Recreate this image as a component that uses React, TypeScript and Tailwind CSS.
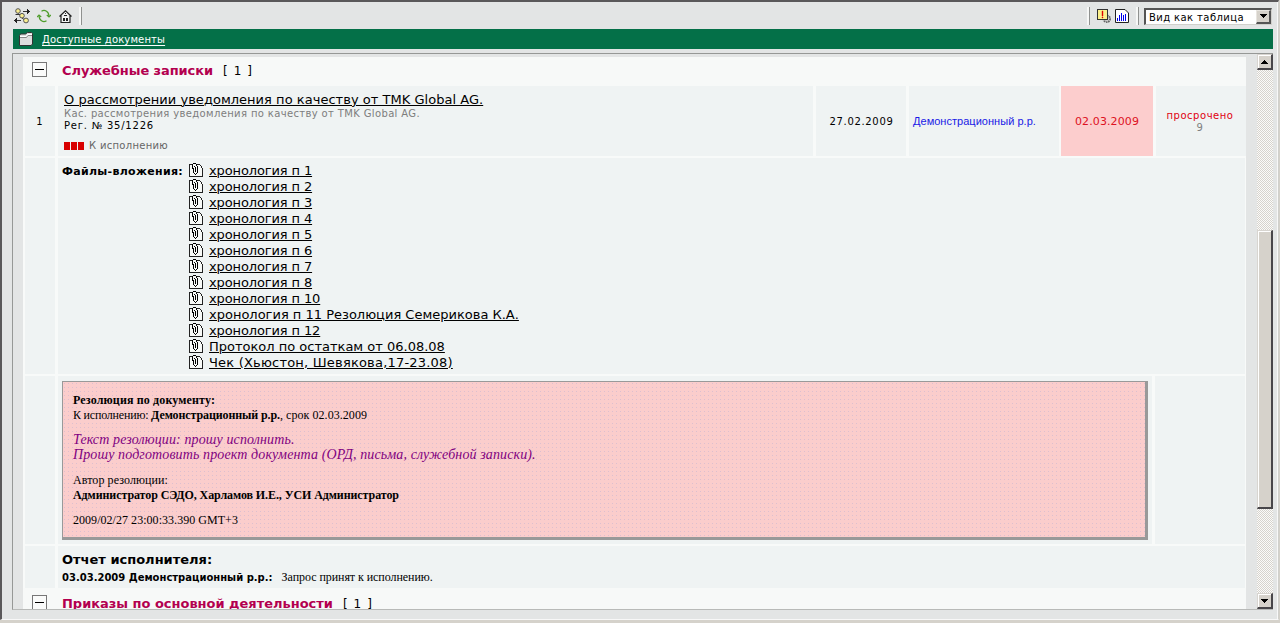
import type { ReactNode } from "react";

const cell = "bg-[#eff3f3]";

function Separator() {
  return <div className="h-[18px] w-[3px] border-l-2 border-r border-l-[#f6f7f6] border-r-[#8f918f]" />;
}

function FlowIcon() {
  return (
    <svg width="16" height="16" viewBox="0 0 16 16">
      <path d="M9 3.500h4M3 12.500h4M4 5.500L6 7M8 10l2 1.500M1.500 6.500H6" stroke="#333" />
      <path d="M13 1h1v1h1v1h1v1h-1v1h-1v1h-1zM3 10H2v1H1v1H0v1h1v1h1v1h1z" fill="#222" shapeRendering="crispEdges" />
      <g fill="#f9ee90" stroke="#555">
        <circle cx="4" cy="3" r="2.300" />
        <circle cx="8" cy="7.700" r="2.300" />
        <circle cx="12" cy="12.500" r="2.400" />
      </g>
    </svg>
  );
}

function RefreshIcon() {
  return (
    <svg width="14" height="14" viewBox="0 0 14 14" fill="none" stroke="#4f9d2c" strokeWidth="1.2">
      <path d="M4.500 2.200Q7 0.600 9.500 2.200T12 7.500M9.500 11.800Q7 13.400 4.500 11.800T2 6.500" />
      <path d="M0 8l2-2 2.200 2M9.800 6L12 8l2-2" />
    </svg>
  );
}

function HomeIcon() {
  return (
    <svg width="13" height="13" viewBox="0 0 13 13">
      <path d="M0.500 6.500L6.500 0.800l6 5.700M2 5.500v7h9v-7" fill="#f4f4f4" stroke="#222" strokeWidth="1.200" />
      <path d="M6 3h1v1H6zM5 5h3v1H5zM4 8h2v3H4zM7 8h2v3H7z" fill="#222" shapeRendering="crispEdges" />
    </svg>
  );
}

function AlertIcon() {
  return (
    <svg width="14" height="14" viewBox="0 0 14 14">
      <circle cx="9.800" cy="9.800" r="3.300" fill="#ccc" stroke="#666" strokeWidth="1.800" strokeDasharray="1.500 .7" />
      <rect x="0.500" y="0.500" width="10" height="10" fill="#fbf08c" stroke="#333" />
      <path d="M5 2h1v5H5zM5 8h1v1H5z" fill="#e00000" stroke="#e00000" strokeWidth="0.400" />
    </svg>
  );
}

function ChartIcon() {
  return (
    <svg width="14" height="14" viewBox="0 0 14 14">
      <path d="M0.500 0.500h9.500l3.500 3.500v9.500h-13z" fill="#fff" stroke="#222" />
      <path d="M2 9h1v3H2zM4 6h1v6H4zM6 4h1v8H6zM8 6h1v6H8zM10 5h1v7h-1z" fill="#0000ee" shapeRendering="crispEdges" />
    </svg>
  );
}

function FolderIcon() {
  return (
    <svg width="14" height="14" viewBox="0 0 14 14">
      <path d="M0.500 3.500l1-1.500h5l2-1.500h4l1 1V12l-1.500 1.500h-11.500z" fill="#dedede" stroke="#333" />
      <path d="M1 5.500h6.500L9 3.500h4" fill="none" stroke="#888" />
      <path d="M1 4.500h6L8.500 2.500H13" fill="none" stroke="#fff" />
    </svg>
  );
}

function ClipIcon() {
  return (
    <svg width="14" height="14" viewBox="0 0 14 14" shapeRendering="crispEdges" className="shrink-0">
      <path d="M0 1h10l4 4v9H0z" fill="#f8faf8" />
      <path d="M0 1h3v1H1v11h12V5h1v9H0zM8 1h3v1H8zM11 2h1v1h-1zM12 3h1v2h-1z" fill="#222" />
      <path d="M4 0h3v1H4zM3 1h1v5H3zM7 1h1v2H7zM8 3h1v7H8zM4 5h1v5H4zM5 10h1v1H5zM7 10h1v1H7zM6 11h1v1H6zM6 4h1v5H6zM5 3h1v1H5z" fill="#000" />
    </svg>
  );
}

function Toggle() {
  return (
    <div className="-mt-px flex h-[15px] w-[15px] items-center justify-center border border-[#777] bg-[#fafbfa]">
      <div className="h-px w-[9px] bg-black" />
    </div>
  );
}

function Arrow({ up = false }: { up?: boolean }) {
  return (
    <svg width="7" height="4" viewBox="0 0 7 4" shapeRendering="crispEdges">
      <path d={up ? "M3 0h1v1h1v1h1v1h1v1H0V3h1V2h1V1h1z" : "M0 0h7v1H6v1H5v1H4v1H3V3H2V2H1V1H0z"} />
    </svg>
  );
}

function ScrollButton({ up }: { up?: boolean }) {
  return (
    <div className="flex h-[16px] shrink-0 items-center justify-center border border-r-2 border-b-2 border-t-[#d8d5d0] border-l-[#d8d5d0] border-r-[#48464a] border-b-[#48464a] bg-[#d6d2cb] shadow-[inset_1px_1px_0_#fff]">
      <Arrow up={up} />
    </div>
  );
}

function SectionHeader({ title, className, tracking }: { title: string; className: string; tracking: string }) {
  return (
    <div className={`flex bg-[#f7f9f8] pl-[9px] ${className}`}>
      <Toggle />
      <h2 className={`ml-[15px] text-[13px] leading-[16px] font-bold text-[#b3004f] ${tracking}`}>{title}</h2>
      <span className="ml-[10px] text-[12px] leading-[16px] tracking-[1.1px]">[ 1 ]</span>
    </div>
  );
}

const files: [string, string][] = [
  ["хронология п 1", "tracking-[-0.12px]"],
  ["хронология п 2", "tracking-[-0.12px]"],
  ["хронология п 3", "tracking-[-0.12px]"],
  ["хронология п 4", "tracking-[-0.12px]"],
  ["хронология п 5", "tracking-[-0.12px]"],
  ["хронология п 6", "tracking-[-0.12px]"],
  ["хронология п 7", "tracking-[-0.12px]"],
  ["хронология п 8", "tracking-[-0.12px]"],
  ["хронология п 10", "tracking-[-0.12px]"],
  ["хронология п 11 Резолюция Семерикова К.А.", "tracking-normal"],
  ["хронология п 12", "tracking-[-0.12px]"],
  ["Протокол по остаткам от 06.08.08", "tracking-normal"],
  ["Чек (Хьюстон, Шевякова,17-23.08)", "tracking-[0.2px]"],
];

function Row({ className, children }: { className: string; children: ReactNode }) {
  return <div className={`grid gap-x-[3px] pl-[2px] pr-[2px] ${className}`}>{children}</div>;
}

export default function App() {
  return (
    <div className="h-[623px] w-[1280px] overflow-hidden bg-[#d5d2cb] font-['DejaVu_Sans',sans-serif] text-black">
      <div className="flex h-[620px] w-[1279px] flex-col border-t-2 border-r border-b border-l-2 border-t-[#5a585a] border-l-[#5a585a] border-r-[#d0d0cc] border-b-[#f8f8f8] bg-[#e3e5e5] pr-[5px] pl-[11px] shadow-[inset_-1px_0_0_#f8f8f8]">
        <div className="flex h-[27px] shrink-0 items-center">
          <div className="flex items-center gap-[8px] pt-px pl-px">
            <FlowIcon />
            <div className="-ml-px"><RefreshIcon /></div>
            <HomeIcon />
          </div>
          <div className="ml-[7px]"><Separator /></div>
          <div className="ml-auto flex items-center">
            <Separator />
            <div className="ml-[7px] flex gap-[4px] pt-px">
              <AlertIcon />
              <ChartIcon />
            </div>
            <div className="ml-[7px]"><Separator /></div>
            <div className="mt-px mr-px ml-[5px] flex h-[17px] w-[128px] border-t-2 border-l-2 border-r border-b border-t-[#555] border-l-[#555] border-r-[#d0d0cc] border-b-[#d0d0cc] bg-white">
              <span className="flex-1 pl-[3px] text-[10px] leading-[15px] tracking-[0.41px] whitespace-nowrap">Вид как таблица</span>
              <div className="flex w-[15px] items-center justify-center border border-r-2 border-b-2 border-t-[#e8e5e0] border-l-[#e8e5e0] border-r-[#555] border-b-[#555] bg-[#d6d2cb]">
                <Arrow />
              </div>
            </div>
          </div>
        </div>

        <div className="flex h-[20px] shrink-0 items-center bg-[#047048] pl-[6px]">
          <FolderIcon />
          <a className="ml-[9px] pt-[2px] text-[10px] leading-[14px] tracking-[0.14px] text-white underline decoration-1 underline-offset-[2px]">Доступные документы</a>
        </div>

        <div className="mt-[4px] -ml-px flex h-[557px] shrink-0 border-t border-b border-l border-t-[#969896] border-l-[#969896] border-b-[#b8bab8]">
          <div className="mt-[3px] ml-[10px] h-[552px] w-[1224px] overflow-hidden bg-[#f8faf9]">
            <SectionHeader title="Служебные записки" className="h-[29px] pt-[6px]" tracking="tracking-[-0.09px]" />

            <Row className="h-[70px] grid-cols-[30px_755px_90px_150px_92px_90px]">
              <div className={`flex items-center justify-center pr-px text-[10px] ${cell}`}>1</div>
              <div className={`pt-[6px] pl-[6px] ${cell}`}>
                <a className="block text-[13px] leading-[16px] tracking-[0.03px] underline decoration-1 underline-offset-[1px]">О рассмотрении уведомления по качеству от TMK Global AG.</a>
                <p className="text-[10px] leading-[12px] tracking-[0.36px] text-[#7d7d7d]">Кас. рассмотрения уведомления по качеству от TMK Global AG.</p>
                <p className="text-[10px] leading-[12px] tracking-[0.79px]">Рег. № 35/1226</p>
                <div className="mt-[8px] flex items-center">
                  <div className="flex gap-px">
                    <i className="h-[8px] w-[6px] bg-[#d80000]" />
                    <i className="h-[8px] w-[6px] bg-[#d80000]" />
                    <i className="h-[8px] w-[6px] bg-[#d80000]" />
                  </div>
                  <span className="ml-[5px] text-[10px] leading-[12px] tracking-[0.3px] text-[#666]">К исполнению</span>
                </div>
              </div>
              <div className={`flex items-center justify-center pl-[1px] text-[10px] tracking-[0.67px] ${cell}`}>27.02.2009</div>
              <div className={`flex items-center pl-[4px] font-['Liberation_Sans',sans-serif] text-[11px] tracking-[0.03px] whitespace-nowrap text-[#1a1ae6] ${cell}`}>Демонстрационный р.р.</div>
              <div className="mr-px -ml-px flex items-center justify-center bg-[#fccdcd] pt-[2px] text-[11px] tracking-[0.1px] text-[#dd1122]">02.03.2009</div>
              <div className={`-ml-px flex flex-col items-center justify-center pt-[2px] pr-[3px] text-[10px] leading-[12px] tracking-[0.53px] ${cell}`}>
                <span className="text-[#e00010]">просрочено</span>
                <span className="text-[#808080]">9</span>
              </div>
            </Row>

            <Row className="mt-[2px] h-[216px] grid-cols-[30px_1187px]">
              <div className={cell} />
              <div className={`flex pt-[5px] pl-[4px] ${cell}`}>
                <b className="w-[127px] text-[11px] leading-[18px] tracking-[0.31px] whitespace-nowrap">Файлы-вложения:</b>
                <ul>
                  {files.map(([name, tracking]) => (
                    <li key={name} className="flex h-[16px] gap-[6px]">
                      <ClipIcon />
                      <a className={`text-[13px] leading-[16px] whitespace-nowrap underline decoration-1 underline-offset-[1px] ${tracking}`}>{name}</a>
                    </li>
                  ))}
                </ul>
              </div>
            </Row>

            <Row className="mt-[2px] h-[168px] grid-cols-[30px_1094px_90px]">
              <div className={cell} />
              <div className={`pt-[5px] pl-[4px] ${cell}`}>
                <div className="h-[159px] w-[1086px] border-t border-r-[3px] border-b-[3px] border-l border-[#999] bg-[#fbcdcc] bg-[radial-gradient(circle_at_1.5px_1.5px,#dcbfcf_0.5px,transparent_0.6px)] bg-[size:4px_4px] pt-[11px] pl-[10px] font-['Liberation_Serif',serif] text-[12px] leading-[15px]">
                  <b className="block tracking-[0.14px]">Резолюция по документу:</b>
                  <p><span className="tracking-[-0.2px]">К исполнению: </span><b className="tracking-[-0.1px]">Демонстрационный р.р.</b><span className="tracking-[0.05px]">, срок 02.03.2009</span></p>
                  <p className="mt-[9px] mb-[11px] text-[14px] tracking-[0.12px] text-[#800080] italic">
                    Текст резолюции: прошу исполнить.<br />
                    Прошу подготовить проект документа (ОРД, письма, служебной записки).
                  </p>
                  <p className="tracking-[0.08px]">Автор резолюции:</p>
                  <b className="block tracking-[-0.08px]">Администратор СЭДО, Харламов И.Е., УСИ Администратор</b>
                  <p className="mt-[10px] tracking-[0.04px]">2009/02/27 23:00:33.390 GMT+3</p>
                </div>
              </div>
              <div className={cell} />
            </Row>

            <Row className="mt-[2px] h-[42px] grid-cols-[30px_1187px]">
              <div className={cell} />
              <div className={`pt-[5px] pl-[4px] ${cell}`}>
                <h3 className="text-[13px] leading-[18px] font-bold">Отчет исполнителя:</h3>
                <div className="flex items-center">
                  <b className="text-[10px] leading-[15px]">03.03.2009 Демонстрационный р.р.:</b>
                  <span className="ml-[9px] pt-px font-['Liberation_Serif',serif] text-[12px] leading-[15px] tracking-[-0.06px]">Запрос принят к исполнению.</span>
                </div>
              </div>
            </Row>

            <SectionHeader title="Приказы по основной деятельности" className="h-[30px] pt-[8px]" tracking="tracking-[-0.02px]" />
          </div>

          <div className="ml-[11px] flex w-[16px] flex-col bg-[repeating-conic-gradient(#d6d3cd_0_25%,#fbfbfa_0_50%)] bg-[size:2px_2px]">
            <ScrollButton up />
            <div className="mt-[160px] h-[279px] border border-r-2 border-b-2 border-t-[#d8d5d0] border-l-[#d8d5d0] border-r-[#48464a] border-b-[#48464a] bg-[#d6d2cb] shadow-[inset_1px_1px_0_#fff]" />
            <div className="mt-auto"><ScrollButton /></div>
          </div>
        </div>
      </div>
    </div>
  );
}
